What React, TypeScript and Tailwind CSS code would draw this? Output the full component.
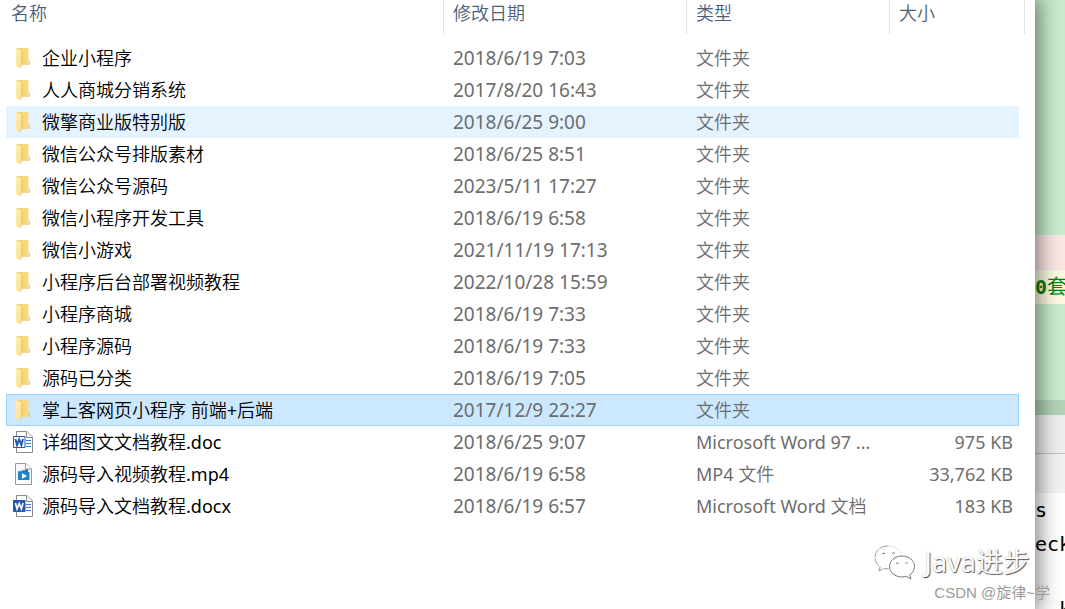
type Kind = "folder" | "doc" | "docx" | "video";

type Entry = {
  name: string;
  date: string;
  type: string;
  size?: string;
  kind: Kind;
  state?: "hover" | "selected";
};

const entries: Entry[] = [
  { name: "企业小程序", date: "2018/6/19 7:03", type: "文件夹", kind: "folder" },
  { name: "人人商城分销系统", date: "2017/8/20 16:43", type: "文件夹", kind: "folder" },
  { name: "微擎商业版特别版", date: "2018/6/25 9:00", type: "文件夹", kind: "folder", state: "hover" },
  { name: "微信公众号排版素材", date: "2018/6/25 8:51", type: "文件夹", kind: "folder" },
  { name: "微信公众号源码", date: "2023/5/11 17:27", type: "文件夹", kind: "folder" },
  { name: "微信小程序开发工具", date: "2018/6/19 6:58", type: "文件夹", kind: "folder" },
  { name: "微信小游戏", date: "2021/11/19 17:13", type: "文件夹", kind: "folder" },
  { name: "小程序后台部署视频教程", date: "2022/10/28 15:59", type: "文件夹", kind: "folder" },
  { name: "小程序商城", date: "2018/6/19 7:33", type: "文件夹", kind: "folder" },
  { name: "小程序源码", date: "2018/6/19 7:33", type: "文件夹", kind: "folder" },
  { name: "源码已分类", date: "2018/6/19 7:05", type: "文件夹", kind: "folder" },
  { name: "掌上客网页小程序 前端+后端", date: "2017/12/9 22:27", type: "文件夹", kind: "folder", state: "selected" },
  { name: "详细图文文档教程.doc", date: "2018/6/25 9:07", type: "Microsoft Word 97 ...", size: "975 KB", kind: "doc" },
  { name: "源码导入视频教程.mp4", date: "2018/6/19 6:58", type: "MP4 文件", size: "33,762 KB", kind: "video" },
  { name: "源码导入文档教程.docx", date: "2018/6/19 6:57", type: "Microsoft Word 文档", size: "183 KB", kind: "docx" },
];

function FolderIcon() {
  return (
    <svg viewBox="0 0 22 24" className="h-6 w-[22px] shrink-0" aria-hidden="true">
      <defs>
        <linearGradient id="folderBack" x1="0" x2="1" y1="0" y2="0">
          <stop offset="0" stopColor="#efc964" />
          <stop offset="1" stopColor="#fbdc84" />
        </linearGradient>
        <linearGradient id="folderFront" x1="0" x2="1" y1="0" y2="1">
          <stop offset="0" stopColor="#fff0b8" />
          <stop offset="1" stopColor="#fbdd87" />
        </linearGradient>
      </defs>
      <path d="M4 2h12.500v17H4z" fill="url(#folderBack)" />
      <path d="M16.500 14.500h1.500v4.500h-1.500z" fill="#f1cd72" />
      <path d="M4 2l5.500 2.500v15l-1.500 3-4-3z" fill="url(#folderFront)" />
      <path d="M9.500 4.500v15L8 22" fill="none" stroke="#e9c36a" strokeWidth=".7" />
    </svg>
  );
}

function WordIcon({ solid }: { solid: boolean }) {
  return (
    <svg viewBox="0 0 22 24" className="h-6 w-[22px] shrink-0" aria-hidden="true">
      <path d="M4.500 1.500H15L20.500 7v15.500h-16z" fill="#fff" stroke="#8a8a8a" />
      <path d="M14.500 1.500v6h6" fill="#f4f4f4" stroke="#8a8a8a" />
      <path d="M14 10.500h5M14 13.500h5M14 16.500h5" stroke="#3e79c4" strokeWidth="1.200" />
      <path d="M1.500 6.500h11.500v11H1.500z" fill={solid ? "#2059ad" : "#fff"} stroke="#2059ad" />
      <path
        d="M3.500 9l1.500 6L7.200 9.500 9.400 15 11 9"
        fill="none"
        stroke={solid ? "#fff" : "#2059ad"}
        strokeWidth={solid ? 1.600 : 2}
      />
    </svg>
  );
}

function VideoIcon() {
  return (
    <svg viewBox="0 0 22 24" className="h-6 w-[22px] shrink-0" aria-hidden="true">
      <path d="M3.500 1.500H14l5.500 5.500v15.500h-16z" fill="#fafafa" stroke="#999" />
      <path d="M13.500 1.500v5.500h6" fill="#fff" stroke="#999" />
      <path d="M6 9.500l10-2.500v3H6z" fill="#1d6fb5" />
      <path d="M8 9.200l1.500-.4M11.500 8.300l1.500-.4" stroke="#a9dbf7" strokeWidth="1.200" />
      <path d="M6 10h11.500v8H6z" fill="#1f83cf" />
      <path d="M10 11.200l5 2.800-5 2.800z" fill="#fff" />
    </svg>
  );
}

function EntryIcon({ kind }: { kind: Kind }) {
  if (kind === "folder") return <FolderIcon />;
  if (kind === "video") return <VideoIcon />;
  return <WordIcon solid={kind === "docx"} />;
}

function ChatLogo() {
  return (
    <svg viewBox="0 0 44 38" className="h-[38px] w-11 shrink-0" fill="#fff" aria-hidden="true">
      <path
        d="M15 3C7.500 3 2 8 2 14.500c0 4 2 7.200 5.200 9.300L6 28l5-2.600c1.500.4 3 .6 4.500.6"
        stroke="#999"
        strokeDasharray="9 1"
      />
      <path d="M15 3c7 0 12 3.500 13.500 9" stroke="#ccc" strokeDasharray="2 1.500" />
      <path
        d="M29 13c-7 0-12.500 4.600-12.500 10.500S22 34 29 34c1.500 0 3-.2 4.400-.7L38 36l-1.200-4.300C40 29.700 41.500 27 41.500 23.500 41.500 17.600 36 13 29 13z"
        stroke="#777"
      />
      <path
        d="M9 11.500a2 2 0 0 1 3-1M19 10.500a2 2 0 0 1 3 0M23 21a1.800 1.800 0 0 1 3-.5M32 20.500a1.800 1.800 0 0 1 3 0"
        stroke="#777"
        fill="none"
      />
    </svg>
  );
}

const cell = {
  none: "border-transparent",
  hover: "border-[#e5f3ff] bg-[#e5f3ff]",
  selected: "border-[#99d1ff] bg-[#cce8ff]",
};

function Row({ entry }: { entry: Entry }) {
  const tone = cell[entry.state ?? "none"];
  return (
    <tr className="h-8 text-[#6d6d6d]">
      <td className={`border-y border-l p-0 pl-[5px] text-black ${tone}`}>
        <div className="flex items-center gap-2">
          <EntryIcon kind={entry.kind} />
          <span className="truncate">{entry.name}</span>
        </div>
      </td>
      <td className={`border-y p-0 pl-[9px] text-[19px] ${tone}`}>{entry.date}</td>
      <td className={`border-y p-0 pl-[9px] ${tone}`}>{entry.type}</td>
      <td className={`border-y border-r p-0 pr-[5px] text-right ${tone}`}>{entry.size}</td>
      <td className="p-0" />
    </tr>
  );
}

function Heading({ label, first, span }: { label: string; first?: boolean; span?: number }) {
  return (
    <th scope="col" colSpan={span} className="h-[42px] p-0 text-left align-top font-normal">
      <div
        className={`h-[34px] border-r border-[#e2e2e2] leading-[26px] ${first ? "pl-[5px]" : "pl-[9px]"}`}
      >
        {label}
      </div>
    </th>
  );
}

function EditorBehind() {
  return (
    <aside className="flex w-[30px] shrink-0 flex-col overflow-hidden whitespace-nowrap bg-white font-['DejaVu_Sans_Mono','Noto_Sans_CJK_SC',monospace] text-[20px] text-black">
      <div className="h-[235px] shrink-0 bg-[#c8eccc]" />
      <div className="h-[35px] shrink-0 bg-[#fbe7e5]" />
      <div className="flex h-[34px] shrink-0 items-center bg-[#fdf9e0] text-[#0b800b]">
        <b>0</b>套
      </div>
      <div className="h-24 shrink-0 bg-[#c8eccc]" />
      <div className="h-[15px] shrink-0 bg-[#b1d3b6]" />
      <div className="h-[38px] shrink-0 bg-[#eeeeee]" />
      <div className="h-10 shrink-0 border-t border-[#c4c4c4] bg-[#f2f2f2]" />
      <div className="h-[34px] shrink-0 leading-[34px]">s</div>
      <div className="h-[34px] shrink-0 leading-[34px]">eck</div>
      <div className="h-[34px] shrink-0" />
      <div className="shrink-0 pl-6 pt-1 leading-5">k</div>
    </aside>
  );
}

export default function App() {
  return (
    <div className="relative flex h-screen overflow-hidden bg-white font-['Noto_Sans','Noto_Sans_CJK_SC_DemiLight','Noto_Sans_CJK_SC_Light','Noto_Sans_CJK_SC',sans-serif] text-[18px] leading-6">
      <main className="relative z-10 min-w-0 flex-1 bg-white pl-[6px] pr-[10px] shadow-[0_0_20px_4px_rgba(0,0,0,0.5)]">
        <table className="w-full table-fixed border-separate border-spacing-0 whitespace-nowrap">
          <colgroup>
            <col />
            <col className="w-[243px]" />
            <col className="w-[203px]" />
            <col className="w-[129px]" />
            <col className="w-[6px]" />
          </colgroup>
          <thead className="text-[#4c607a]">
            <tr>
              <Heading label="名称" first />
              <Heading label="修改日期" />
              <Heading label="类型" />
              <Heading label="大小" span={2} />
            </tr>
          </thead>
          <tbody>
            {entries.map((entry) => (
              <Row key={entry.name} entry={entry} />
            ))}
          </tbody>
        </table>
      </main>
      <EditorBehind />
      <div className="absolute bottom-1 right-[15px] z-20 flex flex-col items-end">
        <div className="mr-5 flex items-center gap-2">
          <ChatLogo />
          <span className="text-[27px] leading-[38px] text-white [text-shadow:1px_1px_1px_#555,0_0_1px_#999]">
            Java进步
          </span>
        </div>
        <span className="font-['Liberation_Sans','Noto_Sans_CJK_SC',sans-serif] text-[15px] leading-6 text-[#9a9a9a]">
          CSDN @旋律~学
        </span>
      </div>
    </div>
  );
}
